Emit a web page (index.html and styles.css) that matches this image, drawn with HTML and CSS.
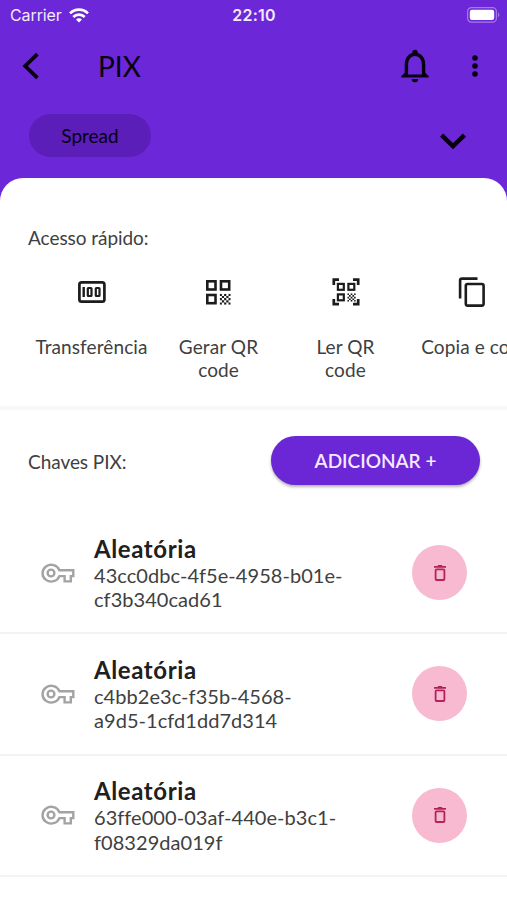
FILE: index.html
```html
<!DOCTYPE html>
<html lang="pt-BR">
<head>
  <meta charset="UTF-8">
  <meta name="viewport" content="width=device-width, initial-scale=1.0">
  <title>PIX</title>
  <link rel="stylesheet" href="styles.css">
</head>
<body>
  <!-- Icons used more than once -->
  <svg class="sprite">
    <symbol id="key" viewBox="0 0 34 20">
      <path d="M18.4 7.2h13.9v5.9h-2.5v5.3h-6.2v-5.3h-5.2a8.7 8.4 0 1 1 0-5.9z" fill="none" stroke="currentColor" stroke-width="2.4"/>
      <circle cx="10" cy="10" r="3.4" fill="none" stroke="currentColor" stroke-width="2.4"/>
    </symbol>
    <symbol id="trash" viewBox="0 0 12 16">
      <path d="M0 1.1h3.4L4.2 0h3.6l.8 1.1H12v1.6H0z" fill="currentColor"/>
      <rect x="1.6" y="4.3" width="8.8" height="10.7" rx="1" fill="none" stroke="currentColor" stroke-width="1.8"/>
    </symbol>
    <symbol id="pixels" viewBox="0 0 10 10">
      <path d="M0 0h2v2H0zM4 0h2v2H4zM2 2h2v2H2zM6 2h2v2H6zM8 0h2v2H8zM0 4h2v2H0zM4 4h2v2H4zM8 4h2v2H8zM2 6h2v2H2zM6 6h2v2H6zM0 8h2v2H0zM4 8h2v2H4zM8 8h2v2H8z" fill="currentColor"/>
    </symbol>
  </svg>

  <header class="header">
    <div class="status-bar">
      <div class="carrier">
        <span>Carrier</span>
        <svg width="20" height="15" viewBox="0 0 20 15" fill="none" stroke="currentColor" stroke-width="2.6">
          <path d="M1 5.4a12.7 12.7 0 0 1 18 0"/>
          <path d="M4.3 9a8 8 0 0 1 11.4 0"/>
          <path d="M10 14.6l-3-3a4.3 4.3 0 0 1 6 0z" fill="currentColor" stroke="none"/>
        </svg>
      </div>
      <span class="time">22:10</span>
      <div class="battery">
        <svg width="33" height="16" viewBox="0 0 33 16">
          <rect x=".6" y=".6" width="28.8" height="14.6" rx="4" fill="none" stroke="#a67be8" stroke-width="1.2"/>
          <rect x="2.8" y="2.8" width="24.4" height="10.2" rx="2.2" fill="#fff"/>
          <path d="M31 5.6a2.6 2.6 0 0 1 0 4.6z" fill="#a67be8"/>
        </svg>
      </div>
    </div>

    <nav class="nav">
      <svg class="back" width="18" height="28" viewBox="0 0 18 28" fill="none" stroke="currentColor" stroke-width="3.8">
        <path d="M15.4 2.2L3.2 14l12.2 11.8"/>
      </svg>
      <h1>PIX</h1>
      <svg class="bell" width="28" height="34" viewBox="0 0 28 34">
        <circle cx="14" cy="3.4" r="2.7" fill="currentColor"/>
        <path d="M5.4 27V15.4C5.4 9.4 9 5.4 14 5.4s8.6 4 8.6 10V27" fill="none" stroke="currentColor" stroke-width="3.4"/>
        <path d="M.3 28.4V27L4 23.7v1.8h20v-1.8l3.7 3.3v1.4zM10.7 29.9h6.6a3.3 3.3 0 0 1-6.6 0z" fill="currentColor"/>
      </svg>
      <svg width="6" height="22" viewBox="0 0 6 22" fill="currentColor">
        <circle cx="3" cy="3" r="2.8"/><circle cx="3" cy="11" r="2.8"/><circle cx="3" cy="19" r="2.8"/>
      </svg>
    </nav>

    <div class="account">
      <span class="chip">Spread</span>
      <svg class="expand" width="26" height="17" viewBox="0 0 26 17" fill="none" stroke="currentColor" stroke-width="4.4">
        <path d="M1.6 2.1L13 13.2 24.4 2.1"/>
      </svg>
    </div>
  </header>

  <main class="sheet">
    <section class="quick">
      <h2>Acesso rápido:</h2>
      <div class="actions">
        <a class="action">
          <span class="icon">
            <svg width="28" height="22" viewBox="0 0 28 22" fill="none" stroke="currentColor">
              <rect x="1.4" y="1.4" width="25" height="19.2" rx="2.2" stroke-width="2.7"/>
              <path d="M5.7 6v10" stroke-width="2.4"/>
              <rect x="9.8" y="7" width="3.7" height="8" rx=".6" stroke-width="2.2"/>
              <rect x="17.8" y="7" width="3.7" height="8" rx=".6" stroke-width="2.2"/>
            </svg>
          </span>
          <span>Transferência</span>
        </a>
        <a class="action">
          <span class="icon">
            <svg width="25" height="25" viewBox="0 0 25 25" fill="none" stroke="currentColor" stroke-width="2.6">
              <rect x="1.3" y="1.3" width="8.2" height="8.2"/>
              <rect x="15" y="1.3" width="8.2" height="8.2"/>
              <rect x="1.3" y="15" width="8.2" height="8.2"/>
              <use href="#pixels" x="13.7" y="13.7" width="11" height="11" stroke="none"/>
            </svg>
          </span>
          <span>Gerar QR<br>code</span>
        </a>
        <a class="action">
          <span class="icon">
            <svg width="28" height="28" viewBox="0 0 28 28" fill="none" stroke="currentColor" stroke-width="2.2">
              <path d="M7 1.6H1.8V7M21 1.6h5.2V7M7 26.2H1.8V21M21 26.2h5.2V21" stroke-width="2.7"/>
              <rect x="5.9" y="5.9" width="5.9" height="5.9"/>
              <rect x="16.4" y="5.9" width="5.9" height="5.9"/>
              <rect x="5.9" y="16.4" width="5.9" height="5.9"/>
              <use href="#pixels" x="15.3" y="15.3" width="8.5" height="8.5" stroke="none"/>
            </svg>
          </span>
          <span>Ler QR<br>code</span>
        </a>
        <a class="action">
          <span class="icon copy">
            <svg width="27" height="30" viewBox="0 0 27 30" fill="none" stroke="currentColor" stroke-width="2.6">
              <path d="M2.1 21.5V3.5q0-1.900 1.900-1.900h15.500"/>
              <rect x="7.8" y="7" width="17.800" height="21.600" rx="1.800"/>
            </svg>
          </span>
          <span class="one-line">Copia e cola</span>
        </a>
      </div>
    </section>

    <section class="keys">
      <div class="keys-header">
        <h2>Chaves PIX:</h2>
        <button class="add">ADICIONAR +</button>
      </div>
      <ul class="key-list">
        <li>
          <svg class="key-icon"><use href="#key"/></svg>
          <div class="key-text">
            <h3>Aleatória</h3>
            <p>43cc0dbc-4f5e-4958-b01e-<br>cf3b340cad61</p>
          </div>
          <button class="delete"><svg><use href="#trash"/></svg></button>
        </li>
        <li>
          <svg class="key-icon"><use href="#key"/></svg>
          <div class="key-text">
            <h3>Aleatória</h3>
            <p>c4bb2e3c-f35b-4568-<br>a9d5-1cfd1dd7d314</p>
          </div>
          <button class="delete"><svg><use href="#trash"/></svg></button>
        </li>
        <li>
          <svg class="key-icon"><use href="#key"/></svg>
          <div class="key-text">
            <h3>Aleatória</h3>
            <p>63ffe000-03af-440e-b3c1-<br>f08329da019f</p>
          </div>
          <button class="delete"><svg><use href="#trash"/></svg></button>
        </li>
      </ul>
    </section>
  </main>
</body>
</html>
```

FILE: styles.css
```css
* {
  box-sizing: border-box;
}
body {
  margin: 0;
  height: 900px;
  overflow: hidden;
  font-family: Lato, "Liberation Sans", sans-serif;
  background-color: #6c27d8;
  color: #404040;
}
h1, h2, h3, p, ul {
  margin: 0;
  padding: 0;
  font-weight: 400;
}
svg {
  display: block;
  flex-shrink: 0;
}
.sprite {
  display: none;
}

/* Header */
.header {
  height: 178px;
  color: #08000f;
}
.status-bar {
  display: grid;
  grid-template-columns: 1fr auto 1fr;
  align-items: center;
  height: 30px;
  padding: 0 7px 0 10px;
  font-family: Inter, sans-serif;
  font-size: 16px;
  color: #f3eafd;
}
.carrier {
  display: flex;
  align-items: center;
  gap: 7px;
  letter-spacing: -0.1px;
}
.carrier svg {
  color: #fff;
}
.time {
  margin-left: -2px;
  font-weight: 600;
  letter-spacing: 0.2px;
}
.battery {
  justify-self: end;
  margin-top: -1px;
}
.nav {
  display: flex;
  align-items: center;
  height: 72px;
  padding: 0 29px 0 22px;
}
.nav h1 {
  flex: 1;
  margin-left: 58px;
  font-size: 28px;
  line-height: 34px;
}
.bell {
  margin-right: 43px;
}
.account {
  display: flex;
  justify-content: space-between;
  padding: 12px 41px 0 29px;
}
.chip {
  width: 122px;
  height: 43px;
  border-radius: 22px;
  background-color: #5b1eb9;
  font-size: 19px;
  line-height: 44px;
  text-align: center;
}
.expand {
  margin-top: 19px;
}

/* White sheet */
.sheet {
  height: 722px;
  border-radius: 23px 23px 0 0;
  background-color: #fff;
}
h2 {
  font-size: 19px;
  line-height: 24px;
  letter-spacing: -0.050px;
}
.quick {
  height: 232px;
  padding: 48px 0 0 28px;
  border-bottom: 4px solid #f7f7f7;
}
.actions {
  display: grid;
  grid-template-columns: repeat(4, 127px);
  margin-top: 20px;
  overflow: hidden;
}
.action {
  display: flex;
  flex-direction: column;
  align-items: center;
  font-size: 19px;
  line-height: 23px;
  letter-spacing: 0.100px;
  text-align: center;
}
.icon {
  display: flex;
  align-items: center;
  justify-content: center;
  height: 44px;
  margin-bottom: 21px;
  color: #1c1c1c;
}
.copy {
  margin-right: 3px;
}
.one-line {
  white-space: nowrap;
}
.keys-header {
  display: flex;
  align-items: center;
  justify-content: space-between;
  height: 103px;
  padding: 0 27px 0 28px;
}
.add {
  width: 209px;
  height: 49px;
  margin-top: -2px;
  padding: 0;
  border: none;
  border-radius: 25px;
  background-color: #6b26d6;
  box-shadow: 0 2px 3px rgba(0, 0, 0, 0.3);
  color: #f5e9ff;
  font-family: inherit;
  font-size: 19px;
  font-weight: 600;
}

/* Key list */
.key-list {
  list-style: none;
}
.key-list li {
  display: flex;
  align-items: center;
  height: 121.3px;
  padding: 0 40px 0 41px;
  border-bottom: 2px solid #f3f3f3;
}
.key-icon {
  width: 34px;
  height: 20px;
  color: #a3a3a3;
}
.key-text {
  flex: 1;
  margin-left: 19px;
}
.key-text h3 {
  font-size: 24px;
  line-height: 29px;
  font-weight: 700;
  letter-spacing: 0.6px;
  color: #202020;
}
.key-text p {
  font-size: 20px;
  line-height: 24.5px;
  letter-spacing: 0.050px;
}
.delete {
  display: flex;
  align-items: center;
  justify-content: center;
  width: 55px;
  height: 55px;
  padding: 0;
  border: none;
  border-radius: 50%;
  background-color: #f7bad0;
  color: #b52258;
}
.delete svg {
  width: 12px;
  height: 16px;
}
```
